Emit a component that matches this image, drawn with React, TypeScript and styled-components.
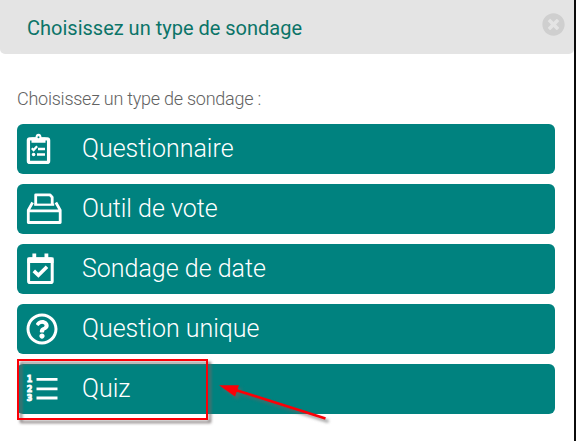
import React from "react";
import styled, { createGlobalStyle } from "styled-components";
import { FaRegQuestionCircle, FaTimesCircle } from "react-icons/fa";

const GlobalStyle = createGlobalStyle`
  * { box-sizing: border-box; }
  html, body { margin: 0; padding: 0; overflow: hidden; }
  body { background: #0b0b0b; font-family: Roboto, "Liberation Sans", sans-serif; }
`;

const Modal = styled.main`
  position: relative;
  width: 574px;
  height: 441px;
  background: #fff;
`;

const Header = styled.header`
  display: flex;
  align-items: center;
  justify-content: space-between;
  height: 54px;
  padding: 0 9px 0 27px;
  background: #e4e4e4;
  border-radius: 0 0 5px 5px;
`;

const Title = styled.h1`
  margin: 2px 0 0;
  font-size: 20px;
  line-height: 24px;
  font-weight: 400;
  color: #0b7468;
  white-space: nowrap;
`;

const CloseButton = styled.button`
  display: flex;
  margin: 0 0 6px;
  padding: 0;
  border: 0;
  background: none;
  color: #cfcfcf;
`;

const Body = styled.section`
  padding: 33px 19px 0 17px;
`;

const Prompt = styled.p`
  margin: 0 0 13px;
  font-size: 18px;
  line-height: 24px;
  font-weight: 300;
  letter-spacing: -0.25px;
  color: #626262;
  white-space: nowrap;
`;

const OptionList = styled.div`
  display: flex;
  flex-direction: column;
  gap: 10px;
`;

const Option = styled.button`
  display: flex;
  align-items: center;
  height: 50px;
  padding: 0;
  border: 0;
  border-radius: 6px;
  background: #00827f;
  color: #fff;
  font: 300 25px/50px Roboto, "Liberation Sans", sans-serif;
  text-align: left;
`;

const Label = styled.span`
  height: 50px;
  line-height: 50px;
`;

const IconSlot = styled.span`
  display: flex;
  width: 65px;
  height: 50px;
  flex: none;

  .question { margin: 9px 0 0 9px; }
`;

const Highlight = styled.div`
  position: absolute;
  left: 17px;
  top: 359px;
  width: 191px;
  height: 61px;
  border: 2px solid #fb0007;
  filter: drop-shadow(3px 3px 1.5px rgba(110, 100, 100, 0.95));
`;

const Arrow = styled.svg`
  position: absolute;
  left: 210px;
  top: 375px;
  filter: drop-shadow(3px 3px 1.5px rgba(100, 100, 100, 0.7));
`;

const ClipboardIcon = () => (
  <svg width="50" height="50" fill="none" stroke="#fff">
    <rect x="11.4" y="14.8" width="20.2" height="23.6" rx="1.5" strokeWidth="3.3" />
    <path d="M14.5 13.5h4a3 3.8 0 0 1 6 0H28.5v5.2h-14z" fill="#fff" stroke="none" />
    <circle cx="21.5" cy="13.3" r="1" fill="#00827f" stroke="none" />
    <path d="M14.8 24.3l1.8 1.8 3.5-3.8M21 25h7M20 30.5h8" strokeWidth="2.3" />
    <circle cx="16.6" cy="30.5" r="1.8" fill="#fff" stroke="none" />
  </svg>
);

const BallotIcon = () => (
  <svg width="50" height="50" fill="none" stroke="#fff" strokeWidth="2.8" strokeLinejoin="round">
    <path d="M18.7 20.5V10.8h14.2l2.3 2.4v7.3" />
    <path d="M17.2 20.7h20" strokeWidth="2.2" />
    <path d="M15.6 18.5l-4.3 7.6v12.4h31.9V26.1l-4.3-7.6M11.3 26.8h31.9" />
  </svg>
);

const CalendarIcon = () => (
  <svg width="50" height="50" fill="none" stroke="#fff">
    <rect x="11.6" y="14.7" width="23.6" height="23.8" rx="1.3" strokeWidth="3" />
    <path d="M10.5 13.5h26v5.4h-26zM15.4 9.4h3.8v5h-3.8zM27.5 9.4h3.8v5h-3.8z" fill="#fff" stroke="none" />
    <path d="M16.8 26.9l4.6 4.4 8.6-8.6" strokeWidth="3.6" />
  </svg>
);

const Digit = styled.text`
  font: 700 8px "DejaVu Sans", sans-serif;
  fill: #fff;
  stroke: #fff;
  stroke-width: 0.9px;
`;

const NumberedIcon = () => (
  <svg width="50" height="50" fill="none" stroke="#fff">
    <path d="M19.5 15.4h21M19.5 24.8h21M19.5 34h21" strokeWidth="2.8" strokeLinecap="butt" />
    <Digit x="9.8" y="17.8">1</Digit>
    <Digit x="9.8" y="27.6">2</Digit>
    <Digit x="9.8" y="37.3">3</Digit>
  </svg>
);

const options = [
  { label: "Questionnaire", icon: <ClipboardIcon /> },
  { label: "Outil de vote", icon: <BallotIcon /> },
  { label: "Sondage de date", icon: <CalendarIcon /> },
  { label: "Question unique", icon: <FaRegQuestionCircle className="question" size={32} /> },
  { label: "Quiz", icon: <NumberedIcon /> },
];

export default function App() {
  return (
    <>
      <GlobalStyle />
      <Modal>
        <Header>
          <Title>Choisissez un type de sondage</Title>
          <CloseButton aria-label="Fermer">
            <FaTimesCircle size={23} />
          </CloseButton>
        </Header>
        <Body>
          <Prompt>Choisissez un type de sondage :</Prompt>
          <OptionList>
            {options.map(({ label, icon }) => (
              <Option key={label}>
                <IconSlot>{icon}</IconSlot>
                <Label>{label}</Label>
              </Option>
            ))}
          </OptionList>
        </Body>
        <Highlight />
        <Arrow width="130" height="60">
          <path d="M24 14.5L115.5 43.5" stroke="#fb0007" strokeWidth="2.6" />
          <path d="M9 10.2L29 10.2L25 21.5z" fill="#fb0007" />
        </Arrow>
      </Modal>
    </>
  );
}
